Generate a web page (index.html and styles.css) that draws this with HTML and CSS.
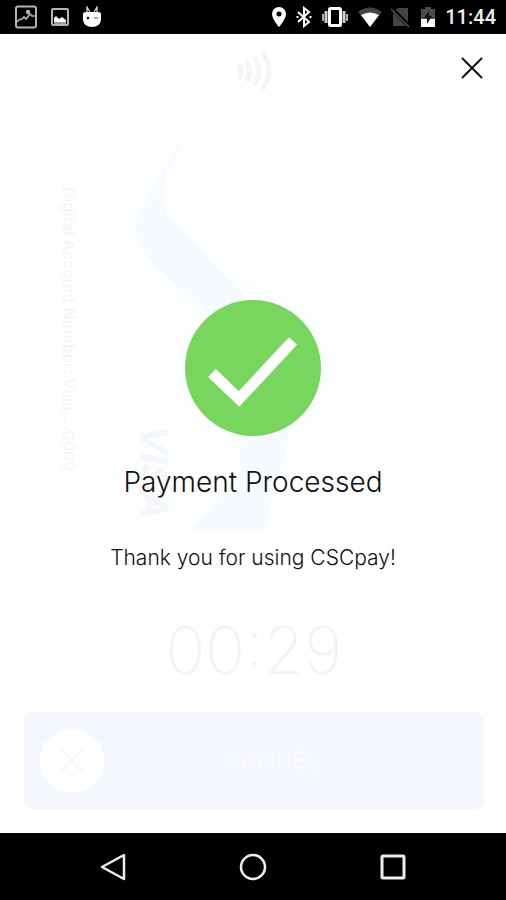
FILE: index.html
```html
<!DOCTYPE html>
<html lang="en">
<head>
<meta charset="utf-8">
<meta name="viewport" content="width=device-width, initial-scale=1">
<title>CSCpay</title>
<link rel="stylesheet" href="styles.css">
</head>
<body>
<header class="status">
  <div class="status-group status-left">
    <svg width="24" height="24" viewBox="0 0 24 24" fill="none" stroke="#b5b5b5" stroke-width="2"><rect x="2" y="1.500" width="20" height="21" rx="2"/><path d="M2 18q3-4 6-4l2-2 2 2 4-5 2 2 3 0" stroke-width="1.600"/><circle cx="14" cy="7" r="1.200" fill="#ddd"/></svg>
    <svg width="20" height="20" viewBox="0 0 20 20"><rect x="2" y="2" width="16" height="16" rx="1" fill="none" stroke="#b5b5b5" stroke-width="2"/><path d="M4 15v-4l2-2 3 3 3-2 4 3v2z" fill="#fff"/><path d="M4 15h12v2H4z" fill="#999"/></svg>
    <svg width="20" height="22" viewBox="0 0 20 22"><path d="M1 8q0-2 3-2h12q3 0 3 2v6q-1 7-9 7t-9-7z" fill="#fff"/><path d="M5 7V1l3 5M12 6l3-5v6" stroke="#ddd" stroke-width="1.200" fill="none"/><circle cx="6" cy="12" r="1.200"/><path d="M12 12h4" stroke="#555"/></svg>
  </div>
  <div class="status-group status-right">
    <svg width="16" height="22" viewBox="0 0 16 22"><path fill="#fff" fill-rule="evenodd" d="M8 1a7 7 0 0 1 7 7c0 5-7 13-7 13S1 13 1 8a7 7 0 0 1 7-7zm0 4.500a2.500 2.500 0 1 0 0 5 2.500 2.500 0 0 0 0-5z"/></svg>
    <svg width="16" height="22" viewBox="0 0 16 22" fill="none" stroke="#fff" stroke-width="2"><path d="M2 6l11 10-5 4V2l5 4L2 16"/><path d="M1.500 10v2M14.500 10v2"/></svg>
    <svg width="28" height="22" viewBox="0 0 28 22"><rect x="8.500" y="2.500" width="11" height="17" rx="1" fill="#000" stroke="#fff" stroke-width="3"/><path d="M5 5v12M23 5v12" stroke="#ccc" stroke-width="3"/><path d="M2 8v7M26 8v7" stroke="#aaa" stroke-width="2"/></svg>
    <svg width="24" height="22" viewBox="0 0 24 22"><path d="M0 6q12-9 24 0L12 21z" fill="#444"/><path d="M3 9q9-5 18 0l-9 12z" fill="#fff"/></svg>
    <svg width="20" height="22" viewBox="0 0 20 22"><path d="M2 6 7 2h10v18H2z" fill="#444"/><path d="M0 2l18 18" stroke="#000" stroke-width="4"/><path d="M0 3l18 18" stroke="#555" stroke-width="1.500"/></svg>
    <svg width="16" height="22" viewBox="0 0 16 22"><path d="M1 3h4V1h6v2h4v10H1z" fill="#4a4a4a"/><path d="M1 13h14v8H1z" fill="#fff"/><path d="M9 5 4 12h3v6l5-8H9z" fill="#111"/></svg>
    <span class="clock">11:44</span>
  </div>
</header>

<main class="app">
  <section class="pay" aria-hidden="true">
    <svg class="nfc" width="36" height="42" viewBox="0 0 36 42" fill="none" stroke="#f5f5f5" stroke-width="5"><path d="M3 14q4 7 0 14M10 11q7 10 0 20M18 7q10 14 0 28M26 2q14 19 0 38"/></svg>
    <div class="card-row">
      <span class="account">Digital Account Number: Visa....0009</span>
      <div class="card">
        <svg class="card-art" viewBox="0 0 257 403" preserveAspectRatio="none">
          <defs><linearGradient id="band" x1="0" y1="0" x2="1" y2="1"><stop offset="0" stop-color="#f9fcfe"/><stop offset="1" stop-color="#f5fafe"/></linearGradient></defs>
          <path d="M64 0 38 52Q33 75 42 89L130 180 80 184 28 138Q0 110 14 80L50 20z" fill="url(#band)"/>
          <path d="M38 50q-6 24 4 39l40 42" fill="none" stroke="#f7fafd" stroke-width="2"/>
          <path d="M120 290h36q12 20 0 45l-18 68H64l52-60q-6-20 4-53z" fill="#f7fafe"/>
        </svg>
        <span class="brand">VISA</span>
      </div>
    </div>
    <p class="hint">Tap and hold near the reader to pay</p>
    <div class="timer">00:29</div>
    <div class="cancel">
      <span class="cancel-icon"><svg width="28" height="28" viewBox="0 0 30 30" stroke="#f5f7fa" stroke-width="3"><path d="M3 3l24 24M27 3 3 27"/></svg></span>
      <span class="cancel-label">CANCEL</span>
    </div>
  </section>

  <section class="result" role="dialog" aria-labelledby="result-title">
    <button class="close" type="button" aria-label="Close"><svg width="24" height="24" viewBox="0 0 24 24" stroke="#111" stroke-width="2"><path d="M2 2l20 20M22 2 2 22"/></svg></button>
    <svg class="check" width="136" height="136" viewBox="0 0 136 136"><circle cx="68" cy="68" r="68" fill="#78d65e"/><path d="M27 73 54 99 108 41" fill="none" stroke="#fff" stroke-width="11"/></svg>
    <h1 class="title" id="result-title">Payment Processed</h1>
    <p class="thanks">Thank you for using CSCpay!</p>
  </section>
</main>

<nav class="nav">
  <button class="nav-button" type="button" aria-label="Back"><svg width="28" height="28" viewBox="0 0 28 28" fill="none" stroke="#eee" stroke-width="2.500" stroke-linejoin="round"><path d="M25 2v24L3 14z"/></svg></button>
  <button class="nav-button" type="button" aria-label="Home"><svg width="28" height="28" viewBox="0 0 28 28" fill="none" stroke="#eee" stroke-width="2.500"><circle cx="14" cy="14" r="12"/></svg></button>
  <button class="nav-button" type="button" aria-label="Recent apps"><svg width="28" height="28" viewBox="0 0 28 28" fill="none" stroke="#eee" stroke-width="3"><rect x="3" y="3" width="22" height="22" rx="1"/></svg></button>
</nav>
</body>
</html>
```
FILE: styles.css
```css
* { box-sizing: border-box; }
body {
  margin: 0;
  min-height: 100vh;
  display: flex;
  flex-direction: column;
  background: #fff;
  color: #111;
  font-family: Inter, Roboto, "Liberation Sans", sans-serif;
}
svg { display: block; flex: none; }
button { padding: 0; border: 0; background: none; cursor: pointer; }
h1, p { margin: 0; }

.status {
  display: flex;
  align-items: center;
  justify-content: space-between;
  height: 34px;
  padding: 0 10px 0 14px;
  background: #000;
}
.status-group { display: flex; align-items: center; }
.status-left { gap: 12px; }
.status-right { gap: 9px; }
.clock { color: #eee; font: 500 20px/24px Roboto, sans-serif; }

.app { position: relative; flex: 1; display: flex; flex-direction: column; }

.pay {
  flex: 1;
  display: flex;
  flex-direction: column;
  align-items: center;
  padding: 16px 22px 24px 24px;
}
.card-row {
  display: grid;
  grid-template-columns: 1fr 257px 1fr;
  align-items: center;
  align-self: stretch;
  margin-top: 36px;
}
.account {
  justify-self: center;
  padding-right: 12px;
  writing-mode: vertical-rl;
  color: #f5f5f5;
  font: 500 16px/20px Inter, sans-serif;
}
.card { position: relative; height: 403px; background: #fcfeff; }
.card-art { width: 100%; height: 100%; }
.brand {
  position: absolute;
  left: 8px;
  bottom: 12px;
  writing-mode: vertical-rl;
  color: #f4f7fa;
  font: italic bold 40px/40px "Liberation Sans", sans-serif;
}
.hint { margin-top: 52px; color: #fdfdfd; font-size: 18px; line-height: 20px; }
.timer {
  margin-top: 12px;
  color: #f3f3f3;
  font: 200 66px/70px Inter, sans-serif;
}
.cancel {
  display: grid;
  grid-template-columns: 64px 1fr 28px;
  align-items: center;
  align-self: stretch;
  height: 97px;
  margin-top: auto;
  padding: 0 16px;
  border-radius: 8px;
  background: #f4f7fd;
}
.cancel-icon {
  display: grid;
  place-items: center;
  width: 64px;
  height: 64px;
  border-radius: 50%;
  background: #fff;
}
.cancel-label { color: #f9fbfd; font-size: 24px; line-height: 28px; text-align: center; }

.result {
  position: absolute;
  inset: 0;
  display: flex;
  flex-direction: column;
  align-items: center;
}
.close {
  display: grid;
  place-items: center;
  align-self: flex-end;
  width: 68px;
  height: 68px;
}
.check { margin-top: 198px; }
.title { margin-top: 28px; font-size: 28px; font-weight: 300; line-height: 36px; }
.thanks { margin-top: 44px; font-size: 21px; font-weight: 300; line-height: 28px; }

.nav {
  display: flex;
  justify-content: center;
  align-items: center;
  gap: 72px;
  height: 67px;
  background: #000;
}
.nav-button { display: grid; place-items: center; width: 68px; height: 64px; }
```
